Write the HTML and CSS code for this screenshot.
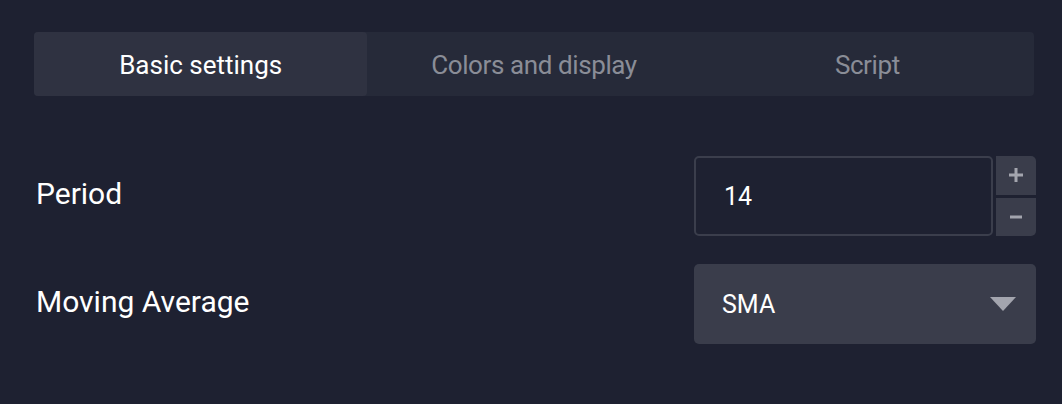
FILE: index.html
```html
<!DOCTYPE html>
<html>
<head>
<meta charset="utf-8">
<link rel="stylesheet" href="styles.css">
</head>
<body>
<div class="panel">
  <div class="tabs">
    <div class="tab active">Basic settings</div>
    <div class="tab">Colors and display</div>
    <div class="tab">Script</div>
  </div>
  <div class="form">
    <div class="row">
      <div class="label">Period</div>
      <div class="control number">
        <div class="input">14</div>
        <div class="steppers">
          <div class="step"><svg width="16" height="16" viewBox="0 0 16 16"><path d="M8 1v14M1 8h14" stroke="#a3a5ae" stroke-width="3"/></svg></div>
          <div class="step"><svg width="16" height="16" viewBox="0 0 16 16"><path d="M2 8h12" stroke="#a3a5ae" stroke-width="3"/></svg></div>
        </div>
      </div>
    </div>
    <div class="row">
      <div class="label">Moving Average</div>
      <div class="control select">
        <span class="value">SMA</span>
        <svg class="caret" width="26" height="14" viewBox="0 0 26 14"><path d="M0 0h26L13 14z" fill="#a3a5ae"/></svg>
      </div>
    </div>
  </div>
</div>
</body>
</html>
```

FILE: styles.css
```css
html, body {
  margin: 0;
  padding: 0;
  background: #1e2131;
  font-family: Roboto, "Liberation Sans", sans-serif;
}
.panel {
  padding: 32px 0 0 34px;
  width: 1002px;
}
.tabs {
  display: flex;
  width: 1000px;
  height: 64px;
  background: #262a39;
  border-radius: 4px;
}
.tab {
  flex: 1;
  display: flex;
  align-items: center;
  justify-content: center;
  font-size: 26px;
  color: #8a8d97;
  letter-spacing: -0.4px;
  border-radius: 4px;
  padding-top: 2px;
}
.tab.active {
  background: #2f3241;
  color: #ffffff;
  letter-spacing: 0;
}
.form {
  margin-top: 60px;
  display: flex;
  flex-direction: column;
  gap: 28px;
}
.row {
  display: grid;
  grid-template-columns: 1fr 342px;
  align-items: center;
  height: 80px;
}
.label {
  font-size: 30px;
  color: #ffffff;
  padding-left: 2px;
  margin-bottom: 6px;
}
.control {
  height: 80px;
}
.number {
  display: flex;
  gap: 3px;
}
.input {
  flex: 1;
  box-sizing: border-box;
  border: 2px solid #3b3e4c;
  border-radius: 5px;
  display: flex;
  align-items: center;
  padding-left: 28px;
  font-size: 25px;
  color: #ffffff;
}
.steppers {
  width: 40px;
  display: flex;
  flex-direction: column;
  gap: 3px;
}
.step {
  flex: 1;
  background: #3a3d4b;
  display: flex;
  align-items: center;
  justify-content: center;
}
.step:first-child { border-top-right-radius: 5px; }
.step:last-child { border-bottom-right-radius: 5px; }
.select {
  background: #3a3d4b;
  border-radius: 5px;
  display: flex;
  align-items: center;
  justify-content: space-between;
  padding: 0 20px 0 28px;
}
.value {
  font-size: 25px;
  color: #ffffff;
}
.caret { display: block; }
```
